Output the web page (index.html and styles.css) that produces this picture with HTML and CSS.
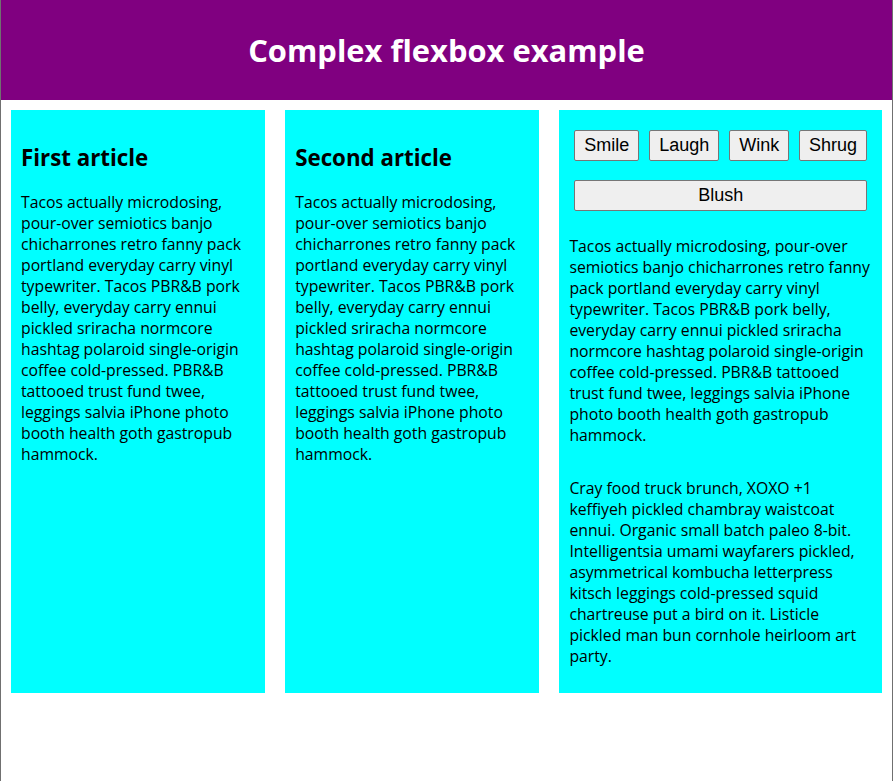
FILE: index.html
```html
<!DOCTYPE html>
<html lang="en">

<head>
    <meta charset="UTF-8">
    <title>Complex flexbox example</title>
    <meta name="viewport" content="width=device-width, initial-scale=1.0">
    <link rel="stylesheet" href="styles.css">
</head>

<body>
    <header>
        <h1>Complex flexbox example</h1>
    </header>

    <section>
        <article>
            <h2>First article</h2>
            <p>Tacos actually microdosing, pour-over semiotics banjo chicharrones retro fanny pack portland everyday carry vinyl typewriter. Tacos PBR&amp;B pork belly, everyday carry ennui pickled sriracha normcore hashtag polaroid single-origin coffee cold-pressed. PBR&amp;B tattooed trust fund twee, leggings salvia iPhone photo booth health goth gastropub hammock.</p>
        </article>

        <article>
            <h2>Second article</h2>
            <p>Tacos actually microdosing, pour-over semiotics banjo chicharrones retro fanny pack portland everyday carry vinyl typewriter. Tacos PBR&amp;B pork belly, everyday carry ennui pickled sriracha normcore hashtag polaroid single-origin coffee cold-pressed. PBR&amp;B tattooed trust fund twee, leggings salvia iPhone photo booth health goth gastropub hammock.</p>
        </article>

        <article>
            <div>
                <button>Smile</button>
                <button>Laugh</button>
                <button>Wink</button>
                <button>Shrug</button>
                <button>Blush</button>
            </div>
            <div>
                <p>Tacos actually microdosing, pour-over semiotics banjo chicharrones retro fanny pack portland everyday carry vinyl typewriter. Tacos PBR&amp;B pork belly, everyday carry ennui pickled sriracha normcore hashtag polaroid single-origin coffee cold-pressed. PBR&amp;B tattooed trust fund twee, leggings salvia iPhone photo booth health goth gastropub hammock.</p>
            </div>
            <div>
                <p>Cray food truck brunch, XOXO +1 keffiyeh pickled chambray waistcoat ennui. Organic small batch paleo 8-bit. Intelligentsia umami wayfarers pickled, asymmetrical kombucha letterpress kitsch leggings cold-pressed squid chartreuse put a bird on it. Listicle pickled man bun cornhole heirloom art party.</p>
            </div>
        </article>
    </section>
</body>

</html>
```

FILE: styles.css
```css
html {
    font-family: 'Open Sans', 'Noto Sans', sans-serif;
    font-size: 15.75px;
    line-height: 21px;
}

body {
    margin: 0;
    width: 891px;
    min-height: 100vh;
    border-left: 1px solid #707070;
    border-right: 1px solid #707070;
}

header {
    background: purple;
    height: 100px;
}

h1 {
    text-align: center;
    color: white;
    line-height: 100px;
    margin: 0;
    font-size: 30.9px;
}

h2 {
    font-size: 22.3px;
    line-height: 32px;
    margin: 22px 0 18px;
}

p {
    margin: 16px 0;
}

article {
    padding: 10px;
    margin: 10px;
    background: aqua;
}

section {
    display: flex;
}

article {
    flex: 1 200px;
}

article:nth-of-type(3) {
    flex: 3 200px;
    display: flex;
    flex-flow: column;
}

article:nth-of-type(3) div:first-child {
    flex: 1 100px;
    display: flex;
    flex-flow: row wrap;
    align-items: center;
    justify-content: space-around;
}

button {
    flex: 1 auto;
    margin: 5px;
    font-family: 'Liberation Sans', Arial, sans-serif;
    font-size: 18px;
    line-height: 1.5;
    padding: 1px 6px;
    background: #efefef;
    color: #000;
    border: 1px solid #767676;
    border-radius: 2px;
}
```
